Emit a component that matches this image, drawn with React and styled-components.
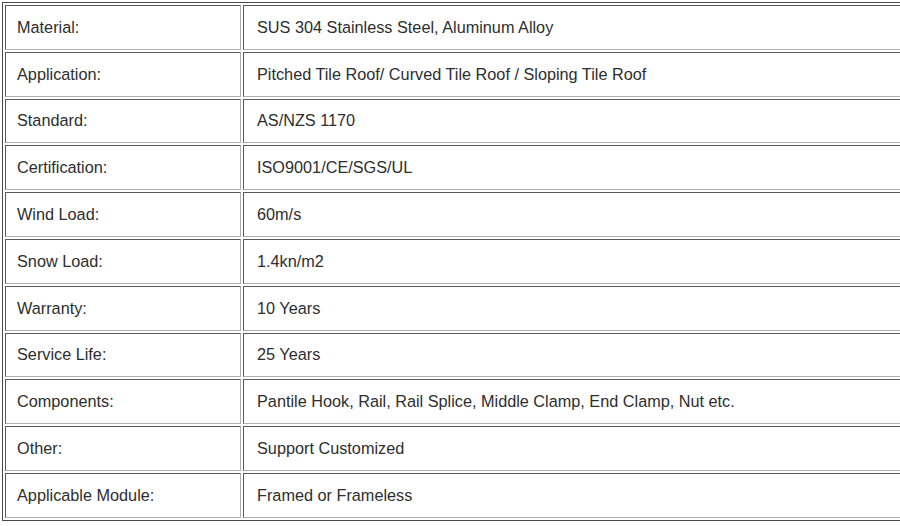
import styled, { createGlobalStyle } from "styled-components";

const GlobalStyle = createGlobalStyle`
  html, body {
    margin: 0;
    padding: 0;
    background: #fff;
    overflow: hidden;
  }
`;

const Page = styled.div`
  width: 900px;
  height: 526px;
  overflow: hidden;
  padding: 2px 0 0 2px;
  box-sizing: border-box;
`;

const SpecTable = styled.table`
  width: 980px;
  border: 1px solid #4a4a4a;
  border-collapse: separate;
  border-spacing: 2px;
  font-family: "Liberation Sans", Arial, sans-serif;
  font-size: 16.25px;
  color: #2e2e2e;
`;

const Cell = styled.td`
  box-sizing: border-box;
  height: 44.8px;
  width: ${(p) => (p.$label ? "236px" : "auto")};
  padding: 0 ${(p) => (p.$label ? "11px" : "13px")};
  vertical-align: middle;
  border-style: solid;
  border-width: 1px;
  border-color: #5a5a5a #b0b0b0 #b0b0b0 #5a5a5a;
  white-space: nowrap;
`;

const specs = [
  ["Material:", "SUS 304 Stainless Steel, Aluminum Alloy"],
  ["Application:", "Pitched Tile Roof/ Curved Tile Roof / Sloping Tile Roof"],
  ["Standard:", "AS/NZS 1170"],
  ["Certification:", "ISO9001/CE/SGS/UL"],
  ["Wind Load:", "60m/s"],
  ["Snow Load:", "1.4kn/m2"],
  ["Warranty:", "10 Years"],
  ["Service Life:", "25 Years"],
  ["Components:", "Pantile Hook, Rail, Rail Splice, Middle Clamp, End Clamp, Nut etc."],
  ["Other:", "Support Customized"],
  ["Applicable Module:", "Framed or Frameless"],
];

export default function App() {
  return (
    <Page>
      <GlobalStyle />
      <SpecTable>
        <tbody>
          {specs.map(([label, value]) => (
            <tr key={label}>
              <Cell $label>{label}</Cell>
              <Cell>{value}</Cell>
            </tr>
          ))}
        </tbody>
      </SpecTable>
    </Page>
  );
}
